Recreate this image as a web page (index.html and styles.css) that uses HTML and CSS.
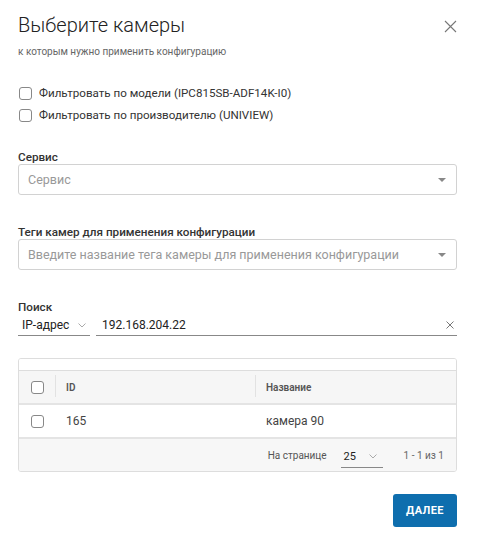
FILE: index.html
```html
<!DOCTYPE html>
<html lang="ru">
<head>
<meta charset="utf-8">
<title>Выберите камеры</title>
<link rel="stylesheet" href="styles.css">
</head>
<body>
<div class="dialog">
  <div class="header">
    <div class="titles">
      <h1 class="title">Выберите камеры</h1>
      <div class="subtitle">к которым нужно применить конфигурацию</div>
    </div>
    <button class="close" aria-label="Закрыть">
      <svg width="13" height="13" viewBox="0 0 13 13"><path d="M1 1L12 12M12 1L1 12" stroke="#777" stroke-width="1.1" fill="none"/></svg>
    </button>
  </div>

  <div class="filters">
    <label class="check-row"><span class="cb"></span>Фильтровать по модели (IPC815SB-ADF14K-I0)</label>
    <label class="check-row"><span class="cb"></span>Фильтровать по производителю (UNIVIEW)</label>
  </div>

  <div class="field field-service">
    <div class="field-label">Сервис</div>
    <div class="select">
      <span class="placeholder">Сервис</span>
      <span class="caret"></span>
    </div>
  </div>

  <div class="field field-tags">
    <div class="field-label">Теги камер для применения конфигурации</div>
    <div class="select">
      <span class="placeholder">Введите название тега камеры для применения конфигурации</span>
      <span class="caret"></span>
    </div>
  </div>

  <div class="field field-search">
    <div class="field-label">Поиск</div>
    <div class="search-row">
      <div class="search-type">
        <span>IP-адрес</span>
        <svg width="8" height="5" viewBox="0 0 8 5"><path d="M0.5 0.5L4 4L7.5 0.5" stroke="#aaa" stroke-width="1" fill="none"/></svg>
      </div>
      <div class="search-input">
        <span class="search-value">192.168.204.22</span>
        <svg width="8" height="8" viewBox="0 0 8 8"><path d="M0.5 0.5L7.5 7.5M7.5 0.5L0.5 7.5" stroke="#777" stroke-width="1" fill="none"/></svg>
      </div>
    </div>
  </div>

  <div class="grid">
    <div class="grid-toolbar"></div>
    <div class="grid-head">
      <div class="cell cell-check"><span class="cb"></span></div>
      <div class="cell cell-id">ID</div>
      <div class="cell cell-name">Название</div>
    </div>
    <div class="grid-row">
      <div class="cell cell-check"><span class="cb"></span></div>
      <div class="cell cell-id">165</div>
      <div class="cell cell-name">камера 90</div>
    </div>
    <div class="grid-footer">
      <span class="per-page-label">На странице</span>
      <div class="per-page">
        <span>25</span>
        <svg width="8" height="5" viewBox="0 0 8 5"><path d="M0.5 0.5L4 4L7.5 0.5" stroke="#aaa" stroke-width="1" fill="none"/></svg>
      </div>
      <span class="range">1 - 1 из 1</span>
    </div>
  </div>

  <div class="actions">
    <button class="primary">ДАЛЕЕ</button>
  </div>
</div>
</body>
</html>
```

FILE: styles.css
```css
* { box-sizing: border-box; }
html, body { margin: 0; padding: 0; background: #fff; }
body {
  font-family: Roboto, "Noto Sans", Arial, sans-serif;
  color: #333;
}
.dialog {
  width: 479px;
  padding: 13px 22px 0 18px;
}
.header {
  display: flex;
  justify-content: space-between;
  align-items: flex-start;
}
.title {
  margin: 0;
  font-size: 20px;
  font-weight: 300;
  line-height: 24px;
  color: #222;
}
.subtitle {
  margin-top: 9px;
  font-size: 10px;
  line-height: 12px;
  color: #666;
}
.close {
  border: 0;
  background: none;
  padding: 0;
  margin: 7px 0 0 0;
  width: 13px;
  height: 13px;
  display: flex;
}
.filters {
  margin-top: 28px;
  display: flex;
  flex-direction: column;
  gap: 8px;
}
.check-row {
  display: flex;
  align-items: center;
  gap: 7px;
  font-size: 11.6px;
  line-height: 14px;
  color: #333;
  white-space: nowrap;
}
.cb {
  display: inline-block;
  width: 13px;
  height: 13px;
  border: 1px solid #888;
  border-radius: 3px;
  background: #fff;
  flex: none;
}
.check-row .cb { margin-left: 1px; }
.field-label {
  font-size: 11.7px;
  font-weight: 500;
  line-height: 14px;
  color: #333;
  white-space: nowrap;
}
.field-service { margin-top: 28px; }
.field-tags { margin-top: 30px; }
.field-search { margin-top: 30px; }
.select {
  height: 31px;
  border: 1px solid #d2d2d2;
  border-radius: 3px;
  display: flex;
  align-items: center;
  justify-content: space-between;
  padding: 0 10px 0 9px;
}
.placeholder {
  font-size: 12.5px;
  color: #999;
  white-space: nowrap;
}
.caret {
  width: 0;
  height: 0;
  border-left: 4px solid transparent;
  border-right: 4px solid transparent;
  border-top: 4px solid #888;
}
.search-row {
  display: flex;
  gap: 6px;
  margin-top: 1px;
}
.search-type {
  width: 72px;
  height: 21px;
  border-bottom: 1px solid #888;
  display: flex;
  align-items: center;
  gap: 9px;
  padding-left: 4px;
  font-size: 12px;
  color: #222;
  white-space: nowrap;
}
.search-input {
  flex: 1;
  height: 21px;
  border-bottom: 1px solid #888;
  display: flex;
  align-items: center;
  justify-content: space-between;
  padding: 0 3px 0 6px;
  font-size: 12px;
  color: #222;
}
.grid {
  margin-top: 22px;
  border: 1px solid #ddd;
  border-radius: 3px;
  overflow: hidden;
  font-size: 12px;
}
.grid-toolbar { height: 11px; background: #fff; }
.grid-head, .grid-row {
  display: grid;
  grid-template-columns: 36px 200px 1fr;
  align-items: center;
}
.grid-head {
  height: 33px;
  background: #f6f6f6;
  border-top: 1px solid #ddd;
  font-size: 10px;
  font-weight: 600;
  color: #555;
}
.grid-row {
  height: 34px;
  background: #fff;
  border-top: 2px solid #e4e4e4;
  font-size: 12px;
  color: #444;
}
.cell { padding-left: 11px; }
.cell-check { padding-left: 12px; display: flex; }
.grid-head .cell-id, .grid-head .cell-name {
  position: relative;
}
.grid-head .cell-id::before, .grid-head .cell-name::before {
  content: "";
  position: absolute;
  left: 0;
  top: -7px;
  height: 22px;
  border-left: 1px solid #e2e2e2;
}
.grid-footer {
  height: 34px;
  background: #f7f7f7;
  border-top: 2px solid #e4e4e4;
  display: flex;
  align-items: center;
  justify-content: flex-end;
  padding-right: 12px;
  font-size: 10px;
  color: #555;
}
.per-page {
  margin-left: 14px;
  width: 42px;
  height: 21px;
  border-bottom: 1px solid #888;
  display: flex;
  align-items: center;
  gap: 13px;
  padding-left: 3px;
  margin-top: 4px;
  font-size: 11px;
  color: #222;
}
.range { margin-left: 21px; color: #666; }
.actions {
  display: flex;
  justify-content: flex-end;
  margin-top: 22px;
}
.primary {
  width: 64px;
  height: 33px;
  border: 0;
  border-radius: 3px;
  background: #0e6eae;
  color: #fff;
  font-family: Roboto, Arial, sans-serif;
  font-size: 11px;
  font-weight: 700;
  letter-spacing: 0.4px;
}
```
